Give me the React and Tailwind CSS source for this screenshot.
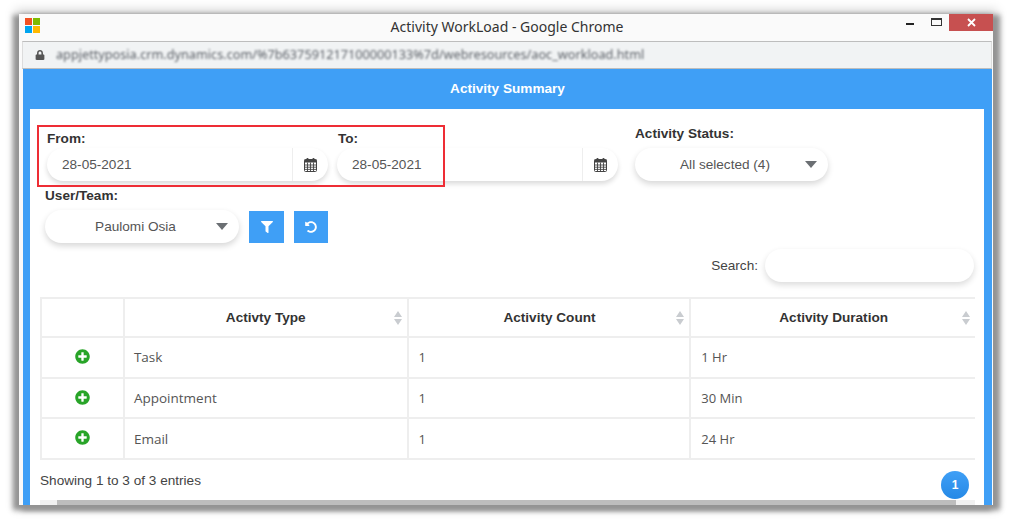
import { FaFilter, FaUndoAlt, FaPlusCircle, FaLock } from "react-icons/fa";

function CalendarIcon() {
  return (
    <svg width="13" height="14" viewBox="0 0 13 14" className="text-[#444]">
      <rect x="0.5" y="1.5" width="12" height="12" rx="1" fill="#fff" stroke="currentColor" />
      <rect x="0.5" y="1.5" width="12" height="3" fill="currentColor" />
      <rect x="2.5" y="0" width="2" height="3.5" rx="0.8" fill="currentColor" />
      <rect x="8.5" y="0" width="2" height="3.5" rx="0.8" fill="currentColor" />
      <path d="M0.5 7h12M0.5 9.2h12M0.5 11.4h12M3.5 4.5v9M6.5 4.5v9M9.5 4.5v9" stroke="currentColor" strokeWidth="0.9" fill="none" />
    </svg>
  );
}

function SortIcon() {
  return (
    <svg width="8" height="14" viewBox="0 0 8 14" className="text-[#c9ccd0]">
      <path d="M4 0L8 6H0Z M4 14L0 8H8Z" fill="currentColor" />
    </svg>
  );
}

function Caret() {
  return <span className="w-0 h-0 border-x-[6.5px] border-x-transparent border-t-[7px] border-t-[#6b6f73]" />;
}

function DateField({ value }) {
  return (
    <div className="flex w-[281px] h-[33px] rounded-full bg-white shadow-[0_3px_5px_rgba(0,0,0,0.14)] text-[13.6px] text-[#555]">
      <div className="flex-1 flex items-center pl-[15px] pt-px">{value}</div>
      <div className="w-[36px] flex items-center justify-center border-l border-[#eeeeee]">
        <CalendarIcon />
      </div>
    </div>
  );
}

function SelectField({ value, width }) {
  return (
    <div className={`flex items-center h-[33px] rounded-full bg-white shadow-[0_3px_6px_rgba(0,0,0,0.16)] text-[13.6px] text-[#555] pr-[11px] ${width}`}>
      <span className="flex-1 text-center pl-[10px] pt-px">{value}</span>
      <Caret />
    </div>
  );
}

const rows = [
  { type: "Task", count: "1", duration: "1 Hr", h: "h-[41px]", extra: "", numExtra: "pt-px" },
  { type: "Appointment", count: "1", duration: "30 Min", h: "h-[40px]", extra: "", numExtra: "pt-px" },
  { type: "Email", count: "1", duration: "24 Hr", h: "h-[39px]", extra: "pt-px", numExtra: "pt-[2px]" },
];

const headers = [
  { label: "Activty Type", w: "w-[284px]", pad: "pt-px" },
  { label: "Activity Count", w: "w-[283px]", pad: "pl-px pt-px" },
  { label: "Activity Duration", w: "w-[284px]", pad: "pl-px pt-px" },
];

export default function App() {
  return (
    <div className="w-[1014px] h-[520px] bg-white pl-[19px] pt-[14px] font-['Liberation_Sans',sans-serif] overflow-hidden">
      <div className="relative flex flex-col w-[974px] h-[491px] bg-[#fafafa] shadow-[-4px_3px_5px_2px_#949494,5px_3px_5px_2px_#949494,0_0_10px_4px_#d4d4d4]">
        {/* title bar */}
        <div className="relative flex items-center justify-center h-[27px] shrink-0 text-[14px] text-[#333] font-['Noto_Sans',sans-serif]">
          <div className="absolute left-[6px] top-[4px] grid grid-cols-2 gap-px w-[15px] h-[15px]">
            <span className="bg-[#f25022]" />
            <span className="bg-[#7fba00]" />
            <span className="bg-[#00a4ef]" />
            <span className="bg-[#ffb900]" />
          </div>
          <span className="pl-[2px] pb-[3px]">Activity WorkLoad - Google Chrome</span>
          <div className="absolute right-0 top-0 flex items-start">
            <span className="w-[8px] h-[2px] bg-[#222] mt-[9px] mr-[17px]" />
            <span className="w-[11px] h-[8px] border border-t-2 border-[#333] mt-[4px] mr-[7px]" />
            <span className="w-[44px] h-[17px] bg-[#c75050] flex items-center justify-center">
              <svg width="9" height="9" viewBox="0 0 9 9">
                <path d="M1 1l7 7M8 1L1 8" stroke="#fff" strokeWidth="1.8" />
              </svg>
            </span>
          </div>
        </div>

        {/* address bar */}
        <div className="flex items-center h-[28px] shrink-0 mx-[3px] mr-px bg-[#f1f3f4] border-y border-y-[#bdbdbd] border-x border-x-[#dcdcdc]">
          <FaLock className="ml-[12px] text-[#555] text-[10px]" />
          <span className="ml-[11px] text-[12.7px] text-[#5a5f66] blur-[1px] font-['Noto_Sans',sans-serif] whitespace-nowrap">
            appjettyposia.crm.dynamics.com/%7b637591217100000133%7d/webresources/aoc_workload.html
          </span>
        </div>

        {/* page */}
        <div className="flex-1 min-h-0 flex flex-col mx-[4px] mr-px bg-[#3f9ff6] overflow-hidden">
          <div className="h-[40px] shrink-0 flex items-center justify-center pt-px text-white font-bold text-[13.6px]">Activity Summary</div>
          <div className="relative flex-1 min-h-0 flex flex-col bg-white mx-[7px] mr-[8px] pl-[10px] overflow-hidden">
            {/* filters */}
            <div className="flex items-start pt-[16px] pl-[7px]">
              <div className="flex flex-col w-[290px]">
                <label className="h-[23px] pt-[6px] text-[13.6px] leading-[16px] font-bold text-[#333]">From:</label>
                <DateField value="28-05-2021" />
              </div>
              <div className="flex flex-col w-[298px]">
                <label className="h-[23px] pt-[6px] pl-px text-[13.6px] leading-[16px] font-bold text-[#333]">To:</label>
                <DateField value="28-05-2021" />
              </div>
              <div className="flex flex-col w-[193px]">
                <label className="h-[23px] pt-px text-[13.6px] leading-[16px] font-bold text-[#333]">Activity Status:</label>
                <SelectField value="All selected (4)" width="w-[193px]" />
              </div>
            </div>
            <div className="flex flex-col mt-[6px] pl-[5px]">
              <label className="h-[23px] pt-px text-[13.6px] leading-[16px] font-bold text-[#333]">User/Team:</label>
              <div className="flex items-center">
                <SelectField value="Paulomi Osia" width="w-[194px]" />
                <button className="ml-[10px] w-[35px] h-[32px] flex items-center justify-center bg-[#3f9ff6] text-white text-[12px]">
                  <FaFilter />
                </button>
                <button className="ml-[10px] w-[34px] h-[32px] flex items-center justify-center bg-[#3f9ff6] text-white text-[12px]">
                  <FaUndoAlt />
                </button>
              </div>
            </div>

            {/* search */}
            <div className="flex items-center justify-end h-[33px] mt-[6px] w-[934px] text-[13.6px] text-[#444]">
              <span className="mr-[7px] pt-px">Search:</span>
              <div className="w-[209px] h-[33px] rounded-full bg-white shadow-[0_3px_6px_rgba(0,0,0,0.14)]" />
            </div>

            {/* table */}
            <div className="w-[935px] mt-[15px] border-y-2 border-l-2 border-[#eeeeee] shrink-0">
              <div className="flex h-[39px] border-b-2 border-[#eeeeee]">
                <div className="w-[83px] border-r-2 border-[#eeeeee]" />
                {headers.map((h, i) => (
                  <div key={h.label} className={`relative flex items-center justify-center text-[13.6px] font-bold text-[#333] ${h.w} ${i < 2 ? "border-r-2 border-[#eeeeee]" : ""}`}>
                    <span className={h.pad}>{h.label}</span>
                    <span className="absolute right-[5px] top-[12px] flex">
                      <SortIcon />
                    </span>
                  </div>
                ))}
              </div>
              {rows.map((r, i) => (
                <div key={r.type} className={`flex text-[13.5px] text-[#555] font-['Open_Sans',sans-serif] ${r.h} ${i < 2 ? "border-b-2 border-[#eeeeee]" : ""}`}>
                  <div className="w-[83px] border-r-2 border-[#eeeeee] flex justify-center pt-[11px]">
                    <FaPlusCircle className="text-[#28a428] text-[15px]" />
                  </div>
                  <div className={`w-[284px] border-r-2 border-[#eeeeee] flex items-center pl-[9px] ${r.extra}`}>{r.type}</div>
                  <div className={`w-[283px] border-r-2 border-[#eeeeee] flex items-center pl-[10px] text-[13px] ${r.numExtra}`}>{r.count}</div>
                  <div className={`w-[284px] flex items-center pl-[10px] text-[13px] ${r.numExtra}`}>{r.duration}</div>
                </div>
              ))}
            </div>

            {/* footer */}
            <div className="flex items-start justify-between w-[935px] shrink-0 pt-[11px] text-[13.6px] text-[#444]">
              <span>Showing 1 to 3 of 3 entries</span>
              <span className="w-[28px] h-[28px] mr-[6px] rounded-full bg-gradient-to-b from-[#3f9ff6] to-[#2589e6] text-white text-[12px] font-bold flex items-center justify-center">1</span>
            </div>

            {/* horizontal scrollbar */}
            <div className="absolute left-[10px] bottom-0 w-[935px] h-[5px] bg-[#f1f1f1] pl-[17px] pr-[19px]">
              <div className="h-full bg-[#bdbdbd]" />
            </div>
          </div>
        </div>

        {/* red highlight */}
        <div className="absolute left-[18px] top-[111px] w-[408px] h-[62px] border-2 border-[#ee2d35] pointer-events-none" />
      </div>
    </div>
  );
}
